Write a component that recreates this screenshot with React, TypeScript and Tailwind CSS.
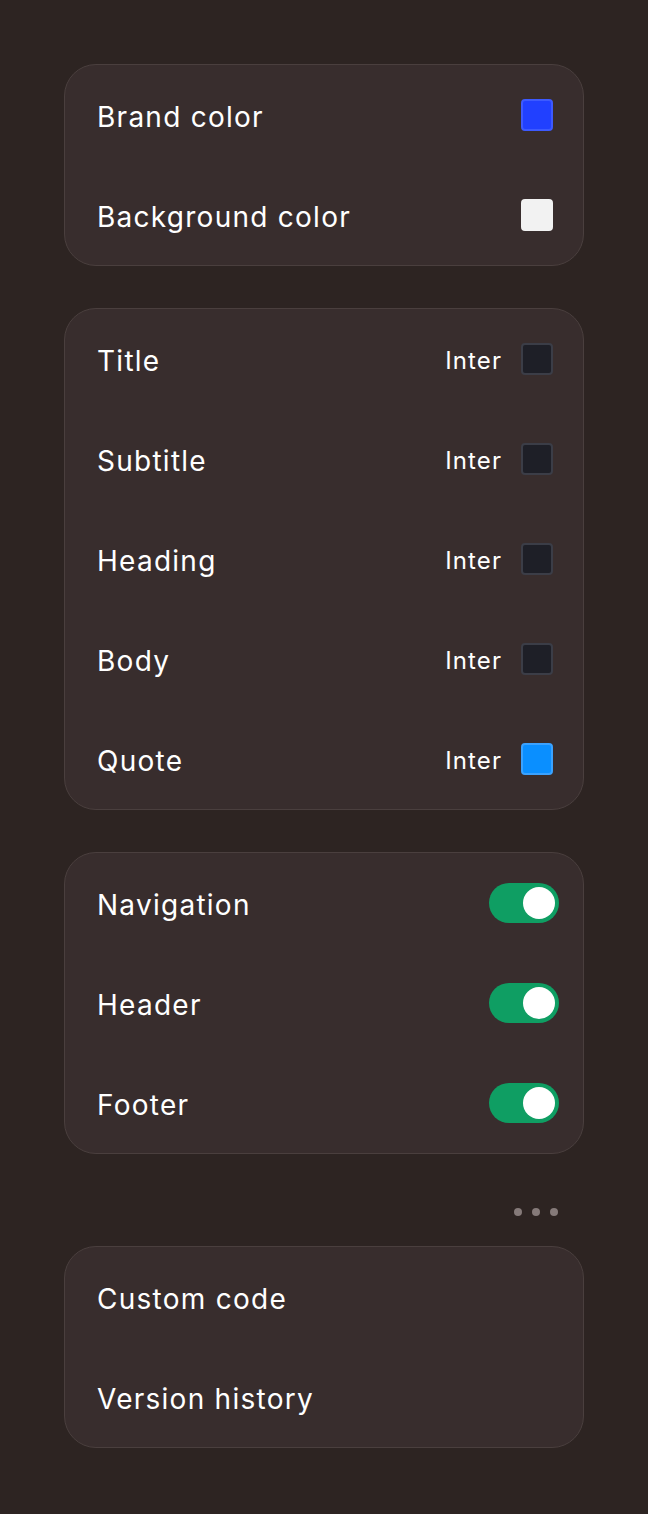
import React from 'react';

type Swatch = { bg: string; border: string };

const fontRows: { label: string; swatch: Swatch }[] = [
  { label: 'Title', swatch: { bg: 'bg-[#1e1f27]', border: 'border-[#3b3d47]' } },
  { label: 'Subtitle', swatch: { bg: 'bg-[#1e1f27]', border: 'border-[#3b3d47]' } },
  { label: 'Heading', swatch: { bg: 'bg-[#1e1f27]', border: 'border-[#3b3d47]' } },
  { label: 'Body', swatch: { bg: 'bg-[#1e1f27]', border: 'border-[#3b3d47]' } },
  { label: 'Quote', swatch: { bg: 'bg-[#0a8fff]', border: 'border-[#3aa2ff]' } },
];

function Card({ children }: { children: React.ReactNode }) {
  return (
    <div className="rounded-[32px] border border-[#4a3f3e] bg-[#382d2d] flex flex-col">
      {children}
    </div>
  );
}

function Row({ label, children }: { label: string; children?: React.ReactNode }) {
  return (
    <div className="h-[100px] flex items-center justify-between pl-8 pr-[30px]">
      <span className="text-[28px] text-white tracking-[0.045em] pt-[3px]">{label}</span>
      {children}
    </div>
  );
}

function ColorBox({ swatch }: { swatch: Swatch }) {
  return <div className={`w-8 h-8 rounded-[4px] border-2 ${swatch.bg} ${swatch.border}`} />;
}

function Toggle() {
  return (
    <div className="w-[70px] h-10 rounded-full bg-[#0f9e63] flex items-center justify-end pr-1 -mr-[6px]">
      <div className="w-8 h-8 rounded-full bg-white" />
    </div>
  );
}

export default function App() {
  return (
    <div
      className="min-h-[1514px] bg-[#2d2422] px-16 pt-16 pb-16"
      style={{ fontFamily: 'Inter, "Liberation Sans", sans-serif' }}
    >
      <div className="flex flex-col gap-[42px]">
        <Card>
          <Row label="Brand color">
            <ColorBox swatch={{ bg: 'bg-[#2140ff]', border: 'border-[#3d5aff]' }} />
          </Row>
          <Row label="Background color">
            <ColorBox swatch={{ bg: 'bg-[#f2f2f2]', border: 'border-[#f2f2f2]' }} />
          </Row>
        </Card>

        <Card>
          {fontRows.map((r) => (
            <Row key={r.label} label={r.label}>
              <div className="flex items-center gap-[19px]">
                <span className="text-[24px] text-white tracking-[0.045em] pt-[3px]">Inter</span>
                <ColorBox swatch={r.swatch} />
              </div>
            </Row>
          ))}
        </Card>

        <Card>
          <Row label="Navigation">
            <Toggle />
          </Row>
          <Row label="Header">
            <Toggle />
          </Row>
          <Row label="Footer">
            <Toggle />
          </Row>
        </Card>
      </div>

      {/* More */}
      <div className="h-[92px] flex items-start justify-end gap-[10px] pt-[54px] pr-[26px]">
        <span className="w-2 h-2 rounded-full bg-[#857a79]" />
        <span className="w-2 h-2 rounded-full bg-[#857a79]" />
        <span className="w-2 h-2 rounded-full bg-[#857a79]" />
      </div>

      <Card>
        <Row label="Custom code" />
        <Row label="Version history" />
      </Card>
    </div>
  );
}
